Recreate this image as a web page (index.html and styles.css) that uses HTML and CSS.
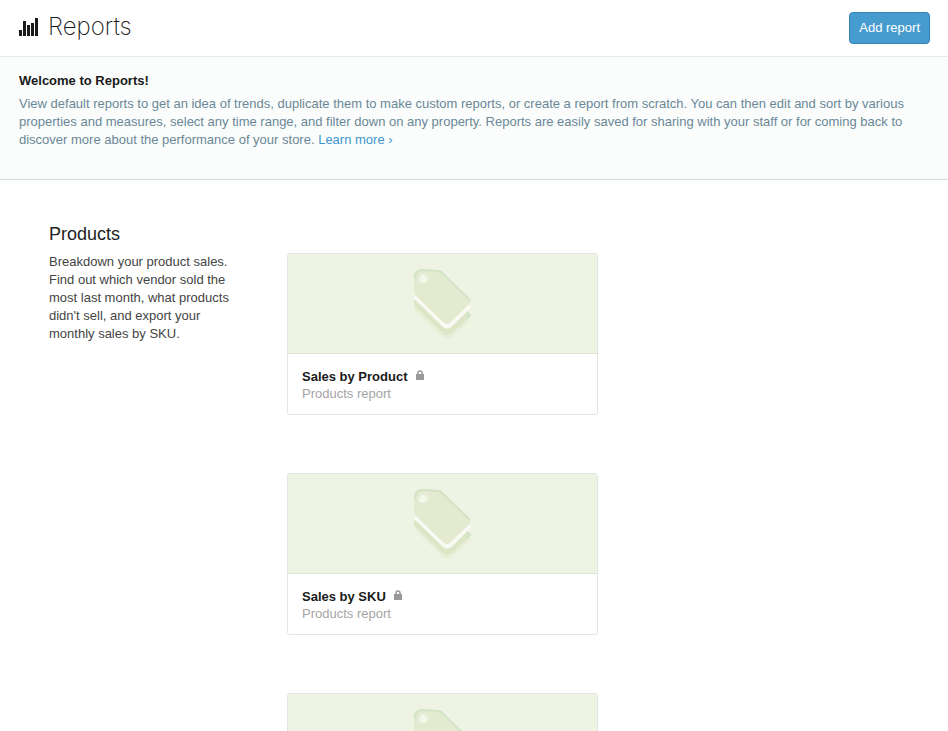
FILE: index.html
```html
<!DOCTYPE html>
<html lang="en">
<head>
	<meta charset="utf-8">
	<title>Reports</title>
	<link rel="stylesheet" href="styles.css">
</head>
<body>
	<!-- shared icons -->
	<svg class="hidden">
		<symbol id="icon-tag" viewBox="0 0 60 74">
			<path fill="#e7edd7" d="M1 36 L30 64 Q34 68 39 64 L57 47 L57 53 L39 70 Q34 74 29 69 L3 44 Q1 42 1 38 Z"/>
			<path fill="#dce6c5" d="M1 33 L4 34 L30 60 Q34 64 39 60 L54 44 L58 48 L39 66 Q34 70 29 65 L3 40 Q1 38 1 36 Z"/>
			<path fill="none" stroke="#cfe3c8" stroke-width="2" d="M54 45 L57 48 L54 51"/>
			<path fill="none" stroke="#f8faf3" stroke-width="4" stroke-linecap="round" stroke-linejoin="round" d="M3 31 L30 57 Q34 61 38 57 L56 40"/>
			<path fill="#e3ead0" d="M1 9 Q1 2 9 2 L25 3 Q28 4 30 6 L56 31 Q59 34 56 37 L38 55 Q34 59 30 55 L4 30 Q1 27 1 23 Z"/>
			<path fill="none" stroke="#d3e4c5" stroke-width="2" d="M2 12 Q2 3 9 3 L25 4 Q28 4 30 7 L57 33"/>
			<circle cx="10" cy="11" r="5" fill="#f3f7e9"/>
			<path fill="none" stroke="#d9e5c8" stroke-width="1" d="M6 12 A4 4 0 0 1 14 10"/>
		</symbol>
		<symbol id="icon-lock" viewBox="0 0 8 11">
			<path fill="none" stroke="#999" stroke-width="1.500" d="M2 6 V3 A2 2 0 0 1 6 3 V6"/>
			<rect fill="#999" x="0" y="4" width="8" height="6"/>
		</symbol>
	</svg>

	<header class="header">
		<h1 class="title">
			<svg class="title-icon" viewBox="0 0 19 18" aria-hidden="true">
				<path fill="#1a1a1a" d="M0 12h3v6H0zM4 3h3v15H4zM8 7h3v11H8zM12 5h3v13h-3zM16 0h3v18h-3z"/>
			</svg>
			Reports
		</h1>
		<button type="button" class="btn">Add report</button>
	</header>

	<section class="intro">
		<h2>Welcome to Reports!</h2>
		<p>View default reports to get an idea of trends, duplicate them to make custom reports, or create a report from scratch. You can then edit and sort by various properties and measures, select any time range, and filter down on any property. Reports are easily saved for sharing with your staff or for coming back to discover more about the performance of your store. <a href="#">Learn more ›</a></p>
	</section>

	<main class="section">
		<div class="summary">
			<h2>Products</h2>
			<p>Breakdown your product sales. Find out which vendor sold the most last month, what products didn't sell, and export your monthly sales by SKU.</p>
		</div>
		<div class="cards">
			<article class="card">
				<div class="card-image">
					<svg class="tag" aria-hidden="true"><use href="#icon-tag"/></svg>
				</div>
				<div class="card-body">
					<h3>Sales by Product <svg class="lock" aria-hidden="true"><use href="#icon-lock"/></svg></h3>
					<p>Products report</p>
				</div>
			</article>
			<article class="card">
				<div class="card-image">
					<svg class="tag" aria-hidden="true"><use href="#icon-tag"/></svg>
				</div>
				<div class="card-body">
					<h3>Sales by SKU <svg class="lock" aria-hidden="true"><use href="#icon-lock"/></svg></h3>
					<p>Products report</p>
				</div>
			</article>
			<article class="card">
				<div class="card-image">
					<svg class="tag" aria-hidden="true"><use href="#icon-tag"/></svg>
				</div>
			</article>
		</div>
	</main>
</body>
</html>
```
FILE: styles.css
```css
* {
  box-sizing: border-box;
}

body {
  margin: 0;
  background: #fff;
  color: #444;
  font-family: "Liberation Sans", Arial, sans-serif;
  font-size: 13px;
  line-height: 18px;
}

h1,
h2,
h3,
p {
  margin: 0;
}

a {
  color: #3f97cd;
  text-decoration: none;
}

.hidden {
  display: none;
}

.header {
  display: flex;
  align-items: center;
  justify-content: space-between;
  height: 57px;
  padding: 0 18px 0 19px;
  border-bottom: 1px solid #e6e8e8;
}

.title {
  display: flex;
  align-items: center;
  gap: 10px;
  padding-bottom: 2px;
  color: #1a1a1a;
  font-family: Inter, sans-serif;
  font-size: 24px;
  font-weight: 200;
  line-height: 32px;
}

.title-icon {
  width: 19px;
  height: 18px;
}

.btn {
  height: 32px;
  padding: 0 9px 2px;
  border: 1px solid #3484b8;
  border-radius: 4px;
  background: #479ccf;
  color: #fff;
  font-family: inherit;
  font-size: 13px;
  cursor: pointer;
}

.intro {
  padding: 15px 19px 30px;
  border-bottom: 1px solid #cddbde;
  background: #fafdfc;
  color: #6a8797;
}

.intro h2 {
  margin-bottom: 5px;
  color: #1a1a1a;
  font-size: 13px;
}

.section {
  display: grid;
  grid-template-columns: 188px minmax(0, 311px);
  gap: 50px;
  padding: 42px 49px 58px;
}

.summary h2 {
  margin-bottom: 7px;
  color: #222;
  font-size: 18px;
  font-weight: normal;
  line-height: 24px;
}

.cards {
  display: grid;
  gap: 58px;
  padding-top: 31px;
}

.card {
  border: 1px solid #dfe6e4;
  border-radius: 3px;
  overflow: hidden;
}

.card-image {
  display: flex;
  align-items: center;
  justify-content: center;
  height: 100px;
  border-bottom: 1px solid #dce5cd;
  background: #eef3e3;
}

.tag {
  width: 60px;
  height: 74px;
}

.card-body {
  padding: 14px 14px 12px;
}

.card-body h3 {
  color: #1a1a1a;
  font-size: 13px;
  line-height: 18px;
}

.card-body p {
  color: #a5a5a5;
  line-height: 16px;
}

.lock {
  width: 8px;
  height: 11px;
  margin-left: 5px;
}
```
